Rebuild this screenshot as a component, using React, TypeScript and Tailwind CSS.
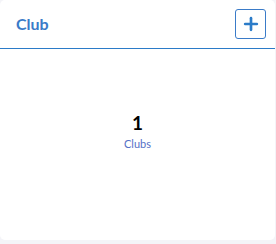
import { Plus } from "lucide-react";

export default function App() {
  return (
    <div className="h-[244px] w-[276px] bg-[#f4f4f8] font-['Lato',sans-serif]">
      <div className="flex h-[240px] w-[275px] flex-col rounded-[5px] bg-white">
        <div className="flex h-[49px] items-center justify-between border-b border-[#2b7bc8] pl-4 pr-[9px]">
          <h2 className="text-[16px] font-bold text-[#3a7bc8]">Club</h2>
          <button className="flex h-[30px] w-[31px] items-center justify-center rounded-[3px] border border-[#3a7bc8] text-[#2b7bc8]">
            <Plus size={20} strokeWidth={3.2} />
          </button>
        </div>
        <div className="flex flex-1 flex-col items-center justify-center pb-[28px]">
          <div className="text-[19px] font-bold leading-none text-black">1</div>
          <div className="mt-[6px] text-[11px] leading-none text-[#5470c6]">Clubs</div>
        </div>
      </div>
    </div>
  );
}
